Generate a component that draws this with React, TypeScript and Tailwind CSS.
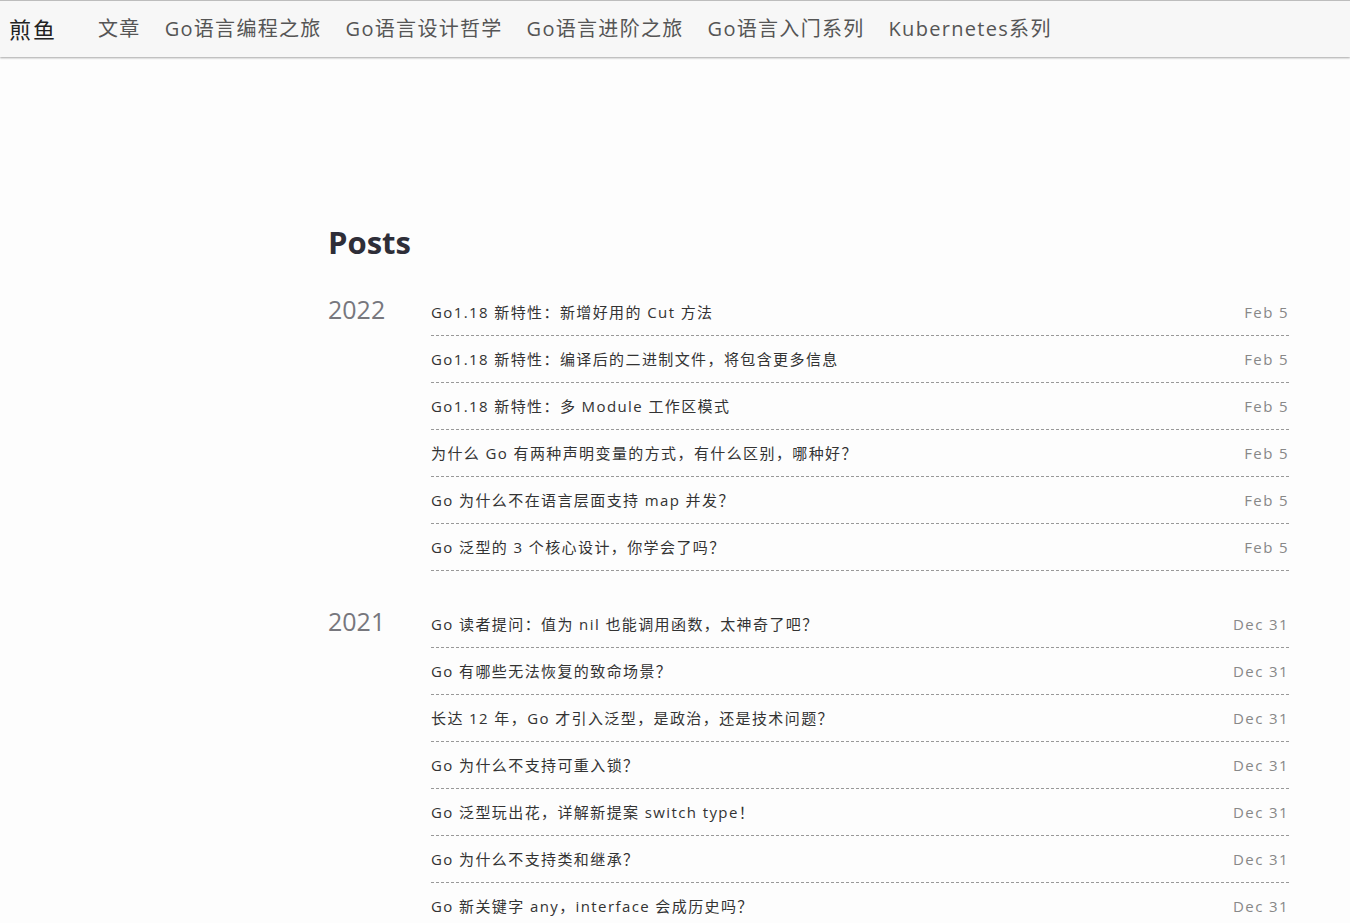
import React from "react";

const font = { fontFamily: '"Open Sans", "Noto Sans CJK SC", sans-serif' };

const nav = ["文章", "Go语言编程之旅", "Go语言设计哲学", "Go语言进阶之旅", "Go语言入门系列", "Kubernetes系列"];

const groups = [
  {
    year: "2022",
    posts: [
      ["Go1.18 新特性：新增好用的 Cut 方法", "Feb 5"],
      ["Go1.18 新特性：编译后的二进制文件，将包含更多信息", "Feb 5"],
      ["Go1.18 新特性：多 Module 工作区模式", "Feb 5"],
      ["为什么 Go 有两种声明变量的方式，有什么区别，哪种好？", "Feb 5"],
      ["Go 为什么不在语言层面支持 map 并发？", "Feb 5"],
      ["Go 泛型的 3 个核心设计，你学会了吗？", "Feb 5"],
    ],
  },
  {
    year: "2021",
    posts: [
      ["Go 读者提问：值为 nil 也能调用函数，太神奇了吧？", "Dec 31"],
      ["Go 有哪些无法恢复的致命场景？", "Dec 31"],
      ["长达 12 年，Go 才引入泛型，是政治，还是技术问题？", "Dec 31"],
      ["Go 为什么不支持可重入锁？", "Dec 31"],
      ["Go 泛型玩出花，详解新提案 switch type！", "Dec 31"],
      ["Go 为什么不支持类和继承？", "Dec 31"],
      ["Go 新关键字 any，interface 会成历史吗？", "Dec 31"],
    ],
  },
];

export default function App() {
  return (
    <div className="min-h-screen bg-[#fdfdfd]" style={font}>
      {/* Header */}
      <header className="h-[57px] border-t border-[#bdbdbd] bg-[#f7f7f7] shadow-[0_1px_2px_rgba(0,0,0,0.35)] flex items-center">
        <a className="pl-[9px] text-[22px] text-[#222] tracking-[2px]">煎鱼</a>
        <nav className="ml-[41px] flex items-center gap-[24px]">
          {nav.map((n) => (
            <a key={n} className="text-[20px] text-[#555] tracking-[1.3px]">
              {n}
            </a>
          ))}
        </nav>
      </header>

      {/* Content */}
      <main className="ml-[328px] w-[961px] pt-[164px]">
        <h1 className="text-[31px] font-bold text-[#2e2e38] leading-[42px]">Posts</h1>
        <div className="mt-[26px] flex flex-col gap-[30px]">
          {groups.map((g) => (
            <section key={g.year} className="flex">
              <div className="w-[103px] shrink-0 text-[25px] text-[#77777d] leading-[40px]">{g.year}</div>
              <ul className="flex-1">
                {g.posts.map(([title, date]) => (
                  <li
                    key={title}
                    className="h-[47px] flex items-center justify-between border-b border-dashed border-[#999]"
                  >
                    <span className="text-[15px] text-[#333] tracking-[1.4px]">{title}</span>
                    <span className="text-[15px] text-[#888] tracking-[1.4px]">{date}</span>
                  </li>
                ))}
              </ul>
            </section>
          ))}
        </div>
      </main>
    </div>
  );
}
